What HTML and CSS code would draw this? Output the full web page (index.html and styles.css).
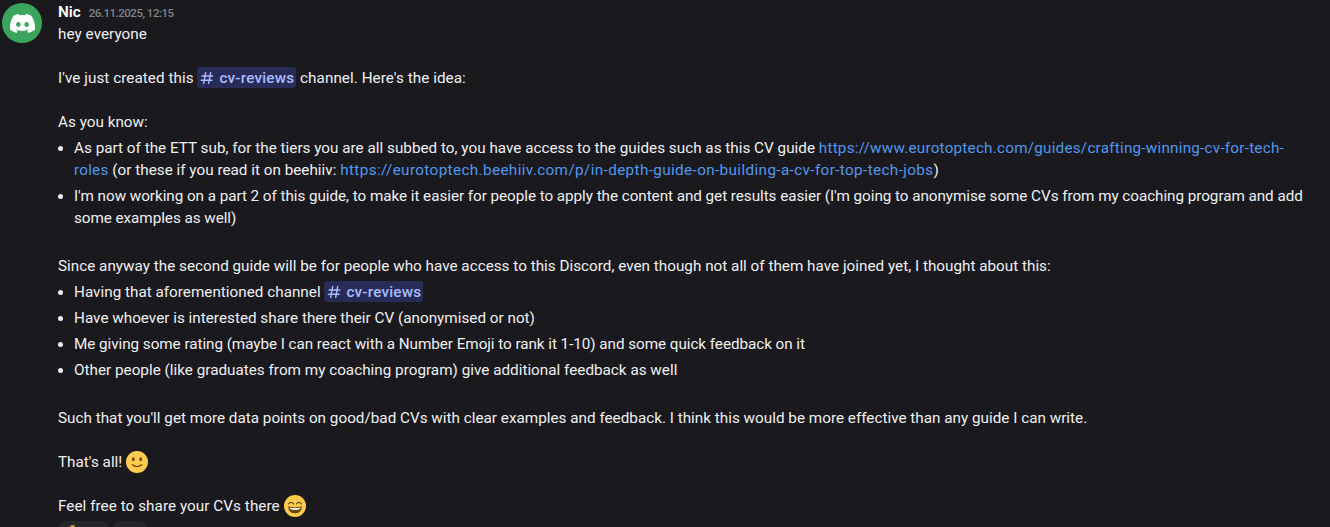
FILE: index.html
```
<!DOCTYPE html>
<html lang="en">
<head>
    <meta charset="UTF-8">
    <meta name="viewport" content="width=device-width, initial-scale=1.0">
    <title>cv-reviews</title>
    <link rel="stylesheet" href="styles.css">
</head>
<body>
    <svg class="sprites" width="0" height="0">
        <symbol id="hash" viewBox="0 0 24 24">
            <path d="M10 4 7 20M17.5 4l-3 16M4.5 9h16M3.5 15.5h16" fill="none" stroke="currentColor" stroke-width="2.2" stroke-linecap="round"/>
        </symbol>
    </svg>

    <div class="message">
        <div class="avatar">
            <svg viewBox="0 0 24 24" width="25" height="25">
                <path fill="#fff" d="M20.32 4.37a19.8 19.8 0 0 0-4.89-1.52.07.07 0 0 0-.08.04c-.21.38-.44.87-.6 1.25a18.3 18.3 0 0 0-5.5 0 12.6 12.6 0 0 0-.62-1.25.08.08 0 0 0-.08-.04 19.7 19.7 0 0 0-4.88 1.52.07.07 0 0 0-.03.03C.53 9.05-.32 13.58.1 18.06a.08.08 0 0 0 .03.05 19.9 19.9 0 0 0 6 3.03.08.08 0 0 0 .08-.03c.46-.63.87-1.3 1.22-2a.08.08 0 0 0-.04-.1 13.1 13.1 0 0 1-1.87-.9.08.08 0 0 1 0-.12l.36-.3a.07.07 0 0 1 .08 0 14.2 14.2 0 0 0 12.06 0 .07.07 0 0 1 .08 0l.37.3a.08.08 0 0 1 0 .12 12.3 12.3 0 0 1-1.88.9.08.08 0 0 0-.04.1c.36.7.78 1.36 1.23 2a.08.08 0 0 0 .08.03 19.8 19.8 0 0 0 6-3.03.08.08 0 0 0 .04-.05c.5-5.18-.84-9.68-3.55-13.66a.06.06 0 0 0-.03-.03zM8.02 15.33c-1.18 0-2.16-1.08-2.16-2.42 0-1.33.96-2.42 2.16-2.42 1.21 0 2.18 1.1 2.16 2.42 0 1.34-.96 2.42-2.16 2.42zm7.97 0c-1.18 0-2.15-1.08-2.15-2.42 0-1.33.95-2.42 2.15-2.42 1.22 0 2.18 1.1 2.16 2.42 0 1.34-.94 2.42-2.16 2.42z"/>
            </svg>
        </div>
        <div class="content">
            <div class="header">
                <span class="username">Nic</span>
                <span class="timestamp">26.11.2025, 12:15</span>
            </div>
            <p class="loose">hey everyone</p>
            <p class="loose">I've just created this <span class="mention"><svg class="hash"><use href="#hash"/></svg>cv-reviews</span> channel. Here's the idea:</p>
            <p class="before-list">As you know:</p>
            <ul>
                <li>As part of the ETT sub, for the tiers you are all subbed to, you have access to the guides such as this CV guide <a class="guide-link">https://www.eurotoptech.com/guides/crafting-winning-cv-for-tech-roles</a> (or these if you read it on beehiiv: <a class="beehiiv-link">https://eurotoptech.beehiiv.com/p/in-depth-guide-on-building-a-cv-for-top-tech-jobs</a>)</li>
                <li class="tight">I'm now working on a part 2 of this guide, to make it easier for people to apply the content and get results easier (I'm going to anonymise some CVs from my coaching program and add some examples as well)</li>
            </ul>
            <p class="before-list">Since anyway the second guide will be for people who have access to this Discord, even though not all of them have joined yet, I thought about this:</p>
            <ul>
                <li>Having that aforementioned channel <span class="mention"><svg class="hash"><use href="#hash"/></svg>cv-reviews</span></li>
                <li>Have whoever is interested share there their CV (anonymised or not)</li>
                <li class="tight">Me giving some rating (maybe I can react with a Number Emoji to rank it 1-10) and some quick feedback on it</li>
                <li>Other people (like graduates from my coaching program) give additional feedback as well</li>
            </ul>
            <p>Such that you'll get more data points on good/bad CVs with clear examples and feedback. I think this would be more effective than any guide I can write.</p>
            <p>That's all! <svg class="emoji" viewBox="0 0 36 36">
                <circle cx="18" cy="18" r="18" fill="#ffcc4d"/>
                <ellipse cx="12" cy="13.5" rx="2.2" ry="3.4" fill="#664500"/>
                <ellipse cx="24" cy="13.5" rx="2.2" ry="3.4" fill="#664500"/>
                <path d="M10.5 22.5Q18 28.5 25.5 22.5" fill="none" stroke="#664500" stroke-width="2.2" stroke-linecap="round"/>
            </svg></p>
            <p class="loose">Feel free to share your CVs there <svg class="emoji" viewBox="0 0 36 36">
                <circle cx="18" cy="18" r="18" fill="#ffcc4d"/>
                <path d="M7.5 14.5Q11.5 9.5 15.5 14.5M20.5 14.5Q24.5 9.5 28.5 14.5" fill="none" stroke="#664500" stroke-width="2" stroke-linecap="round"/>
                <path d="M7 18.5Q18 22 29 18.5Q29 30 18 30Q7 30 7 18.5z" fill="#664500"/>
                <path d="M8.8 20.5Q18 23 27.2 20.5Q27 24.5 18 24.5Q9 24.5 8.8 20.5z" fill="#fff"/>
            </svg></p>
            <div class="reactions">
                <div class="reaction reaction-wide"><span class="thumb"></span></div>
                <div class="reaction"></div>
            </div>
        </div>
    </div>
</body>
</html>
```
FILE: styles.css
```
body {
    margin: 0;
    height: 527px;
    overflow: hidden;
    background-color: #1a1a1e;
    color: #efeff1;
    font-family: Roboto, "Noto Sans", sans-serif;
    font-size: 15.25px;
    line-height: 22px;
    letter-spacing: 0.01px;
}
.sprites {
    position: absolute;
}
.message {
    display: flex;
    gap: 16px;
    padding: 1px 20px 0 2px;
}
.avatar {
    display: flex;
    align-items: center;
    justify-content: center;
    flex: none;
    width: 40px;
    height: 40px;
    margin-top: 2px;
    border-radius: 50%;
    background-color: #3ba55c;
}
.content {
    flex: 1;
    min-width: 0;
}
.header {
    display: flex;
    align-items: baseline;
    gap: 8px;
    height: 22px;
}
.username {
    color: #fff;
    font-weight: 600;
}
.timestamp {
    color: #82838b;
    font-size: 11.5px;
    font-weight: 500;
    letter-spacing: -0.5px;
}
p {
    margin: 0 0 22px;
}
.before-list {
    margin-bottom: 4px;
}
ul {
    margin: 0 0 26px;
    padding-left: 16px;
    list-style: none;
}
li {
    position: relative;
    margin-bottom: 4px;
}
li::before {
    content: "";
    position: absolute;
    left: -16px;
    top: 9px;
    width: 5px;
    height: 5px;
    border-radius: 50%;
    background-color: #efeff1;
}
.tight {
    letter-spacing: -0.05px;
}
.loose {
    letter-spacing: 0.05px;
}
a {
    color: #5197ed;
}
.guide-link {
    letter-spacing: 0.23px;
}
.beehiiv-link {
    letter-spacing: 0.38px;
}
.mention {
    display: inline-block;
    height: 21px;
    padding: 0 2px;
    line-height: 22px;
    border-radius: 3px;
    vertical-align: top;
    background-color: #282b57;
    color: #a9bbff;
    font-weight: 500;
    letter-spacing: 0.2px;
}
.hash {
    width: 16px;
    height: 16px;
    margin-right: 4px;
    vertical-align: -3px;
}
.emoji {
    width: 22px;
    height: 22px;
    vertical-align: top;
}
.reactions {
    display: flex;
    gap: 4px;
    margin-top: -18px;
}
.reaction {
    box-sizing: border-box;
    width: 34px;
    height: 26px;
    border-radius: 8px;
    background-color: #25252a;
}
.reaction-wide {
    width: 51px;
    padding: 4px 12px;
}
.thumb {
    display: block;
    width: 5px;
    height: 12px;
    border-radius: 3px;
    background-color: #dba62f;
}
```
